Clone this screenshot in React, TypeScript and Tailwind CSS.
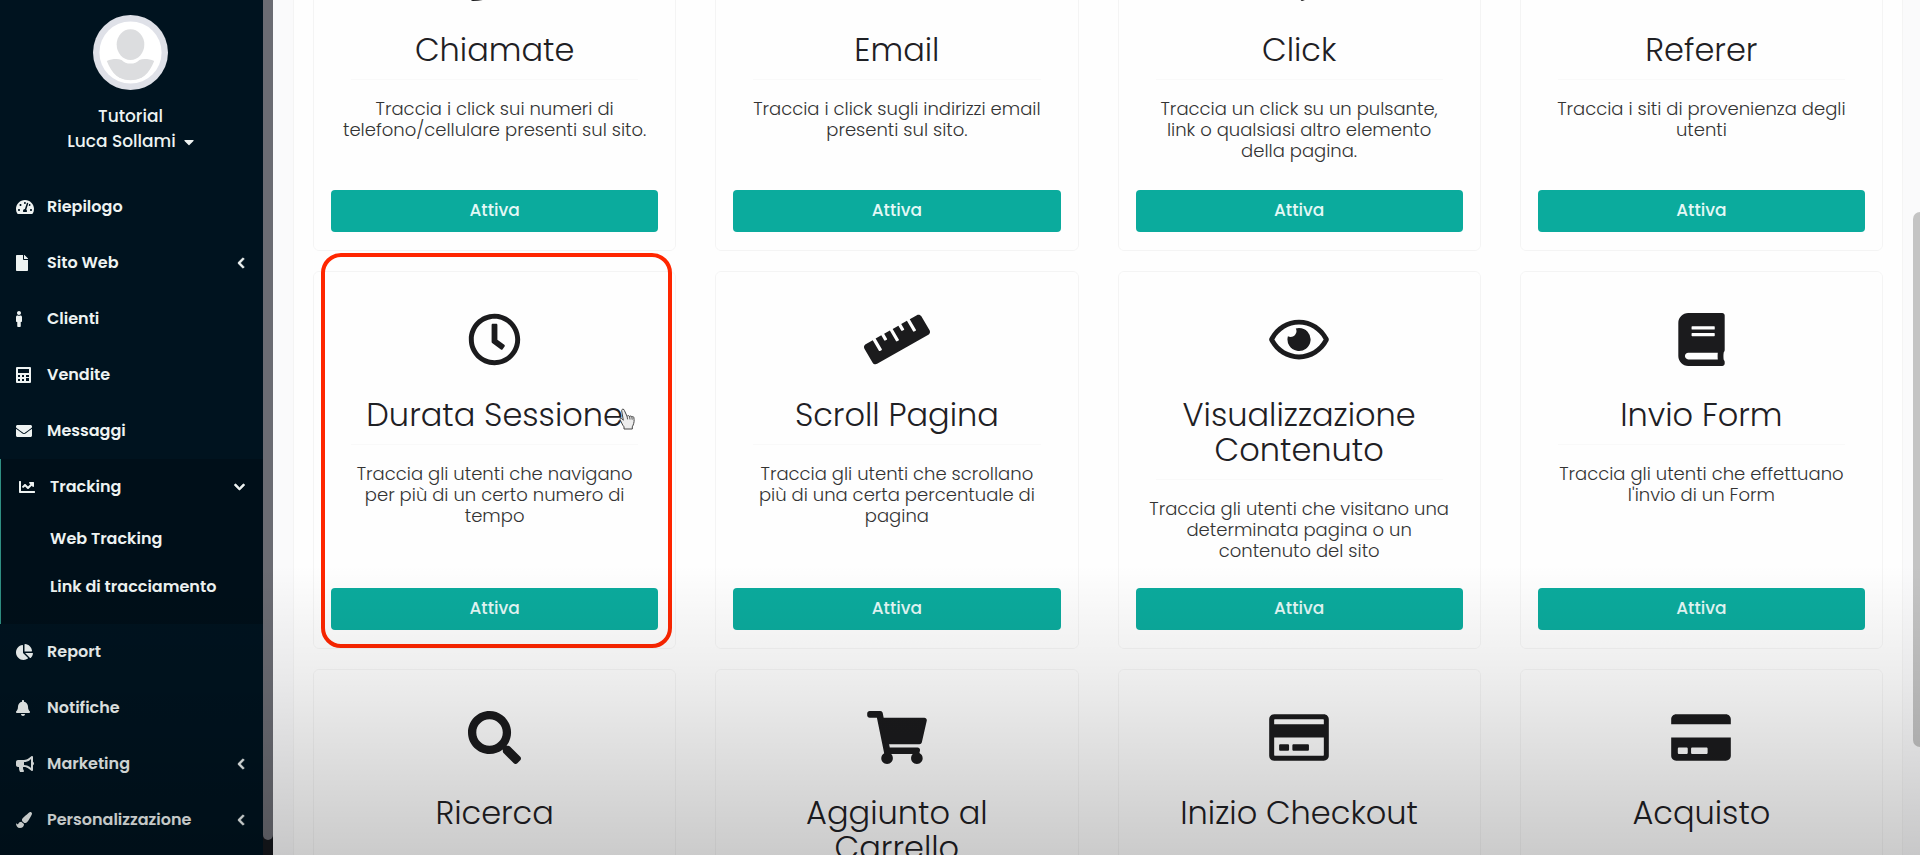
import type { ReactNode } from "react";
import type { IconType } from "react-icons";
import {
  FaBell, FaBook, FaBullhorn, FaCaretDown, FaChartLine, FaChartPie, FaChevronDown, FaChevronLeft,
  FaCreditCard, FaEnvelope, FaFile, FaMale, FaMousePointer, FaPaintBrush, FaPhone, FaRegClock,
  FaRegCreditCard, FaRegEye, FaReply, FaRuler, FaSearch, FaShoppingCart, FaTachometerAlt,
} from "react-icons/fa";

type CardData = { icon: IconType; iconWidth?: string; title: string; text?: string; highlighted?: boolean };

const cards: CardData[] = [
  { icon: FaPhone, title: "Chiamate", text: "Traccia i click sui numeri di telefono/cellulare presenti sul sito." },
  { icon: FaEnvelope, title: "Email", text: "Traccia i click sugli indirizzi email presenti sul sito." },
  { icon: FaMousePointer, title: "Click", text: "Traccia un click su un pulsante, link o qualsiasi altro elemento della pagina." },
  { icon: FaReply, title: "Referer", text: "Traccia i siti di provenienza degli utenti" },
  { icon: FaRegClock, title: "Durata Sessione", text: "Traccia gli utenti che navigano per più di un certo numero di tempo", highlighted: true },
  { icon: FaRuler, iconWidth: "w-[66px]", title: "Scroll Pagina", text: "Traccia gli utenti che scrollano più di una certa percentuale di pagina" },
  { icon: FaRegEye, iconWidth: "w-[60px]", title: "Visualizzazione Contenuto", text: "Traccia gli utenti che visitano una determinata pagina o un contenuto del sito" },
  { icon: FaBook, title: "Invio Form", text: "Traccia gli utenti che effettuano l'invio di un Form" },
  { icon: FaSearch, title: "Ricerca" },
  { icon: FaShoppingCart, iconWidth: "w-[60px]", title: "Aggiunto al Carrello" },
  { icon: FaRegCreditCard, iconWidth: "w-[60px]", title: "Inizio Checkout" },
  { icon: FaCreditCard, iconWidth: "w-[60px]", title: "Acquisto" },
];

const CalculatorIcon: IconType = ({ className }) => (
  <svg viewBox="0 0 15 16" className={className} aria-hidden="true">
    <path
      fill="currentColor"
      fillRule="evenodd"
      d="M1 0h13a1 1 0 0 1 1 1v14a1 1 0 0 1-1 1H1a1 1 0 0 1-1-1V1a1 1 0 0 1 1-1zM2 2v4h11V2zM2 8v2h2V8zM6 8v2h2V8zM10 8v2h3V8zM2 12v2h2v-2zM6 12v2h2v-2zM10 11v3h3v-3z"
    />
  </svg>
);

function HandCursor() {
  return (
    <svg viewBox="0 0 16 22" className="absolute top-[136px] right-[40px] h-[22px] w-4" aria-hidden="true">
      <path
        d="M4 1.2c-1 0-1.500.8-1.300 1.700l1.600 9.300-1.600-1.600c-.8-.7-2-.2-1.700 1l2.800 5.600 1.200 1.600V21h8.300v-2.200c1.200-2.200 2-4.600 1.800-7.200l-.3-2.200c-.2-1-1.600-1.100-1.900-.2-.2-1.400-1.900-1.600-2.300-.5-.3-1.300-2-1.500-2.500-.3L5.400 2.500C5.300 1.700 4.800 1.200 4 1.200z"
        fill="#ededed"
        stroke="#444"
        strokeWidth="1"
      />
      <path d="M8.1 8.400l.5 3M10.600 8.700l.4 2.800M12.900 9.200l.3 2.500" stroke="#444" strokeWidth=".9" />
    </svg>
  );
}

function Card({ icon: Icon, iconWidth = "w-[53px]", title, text, highlighted }: CardData) {
  return (
    <article className="relative flex flex-col rounded-md border border-black/4 px-[17px] pt-[41px] pb-[18px] text-center">
      <Icon className={`mx-auto h-[53px] shrink-0 text-[#1b1b1d] ${iconWidth}`} />
      <h2 className="mx-auto mt-[31px] max-w-[270px] text-[32px] leading-[35px] font-light text-[#1e2024]">{title}</h2>
      {text && (
        <>
          <hr className="mx-5 mt-[12px] border-black/2" />
          <p className="mx-auto mt-[18px] mb-6 max-w-[304px] text-[18px] leading-[21px] font-light text-[#333]">{text}</p>
          <button className="mt-auto h-[42px] shrink-0 rounded-[4px] bg-[#0bab9d] text-[17px] font-medium text-[#e4f8f6]">Attiva</button>
        </>
      )}
      {highlighted && (
        <>
          <span className="pointer-events-none absolute -top-[19px] right-[3px] bottom-0 left-[7px] rounded-[20px] border-4 border-[#ff2600]" />
          <HandCursor />
        </>
      )}
    </article>
  );
}

type NavLinkProps = { icon: IconType; iconWidth: string; children: ReactNode; arrow?: "left" | "down" };

function NavLink({ icon: Icon, iconWidth, children, arrow }: NavLinkProps) {
  return (
    <a href="#" className="flex h-14 items-center pr-[18px] pl-4">
      <span className="w-[31px] shrink-0">
        <Icon className={`h-4 ${iconWidth}`} />
      </span>
      <span className="flex-1">{children}</span>
      {arrow === "left" && <FaChevronLeft className="h-3 w-2 stroke-current stroke-[30px]" />}
      {arrow === "down" && <FaChevronDown className="h-3 w-[11px] stroke-current stroke-[30px]" />}
    </a>
  );
}

function Sidebar() {
  return (
    <aside className="flex w-[273px] shrink-0 bg-[#00131f] text-[#eef3f2]">
      <div className="flex-1">
        <div className="flex flex-col items-center pt-[15px] pr-0.5 text-[17px] leading-[25px] font-medium">
          <svg viewBox="0 0 76 76" className="mb-[14px] size-[75px]" aria-hidden="true">
            <defs>
              <clipPath id="bust">
                <circle cx="38" cy="37" r="29" />
              </clipPath>
            </defs>
            <circle cx="38" cy="38" r="38" fill="#dfe1e8" />
            <circle cx="38" cy="38" r="31.500" fill="#fff" />
            <path d="M14 46.500c5-2 11-2.500 15-1 4 5 14 5 18 0 4-1.500 10-1 15 1-5 13-13 20-24 20s-19-7-24-20z" fill="#dcdddf" clipPath="url(#bust)" />
            <ellipse cx="38" cy="30" rx="14" ry="15.500" fill="#dcdddf" />
          </svg>
          <span>Tutorial</span>
          <button className="flex items-center gap-2">
            Luca Sollami <FaCaretDown className="h-4 w-2.5" />
          </button>
        </div>
        <nav className="mt-[25px] text-[16px] font-semibold">
          <NavLink icon={FaTachometerAlt} iconWidth="w-[18px]">Riepilogo</NavLink>
          <NavLink icon={FaFile} iconWidth="w-3" arrow="left">Sito Web</NavLink>
          <NavLink icon={FaMale} iconWidth="w-1.5">Clienti</NavLink>
          <NavLink icon={CalculatorIcon} iconWidth="w-[15px]">Vendite</NavLink>
          <NavLink icon={FaEnvelope} iconWidth="w-4">Messaggi</NavLink>
          <div className="border-l border-[#2f8f83] bg-[#000f19] pb-[13px] pl-0.5">
            <NavLink icon={FaChartLine} iconWidth="w-4" arrow="down">Tracking</NavLink>
            <a href="#" className="flex h-12 items-center pl-[47px]">Web Tracking</a>
            <a href="#" className="flex h-12 items-center pl-[47px]">Link di tracciamento</a>
          </div>
          <NavLink icon={FaChartPie} iconWidth="w-[17px]">Report</NavLink>
          <NavLink icon={FaBell} iconWidth="w-[14px]">Notifiche</NavLink>
          <NavLink icon={FaBullhorn} iconWidth="w-[18px]" arrow="left">Marketing</NavLink>
          <NavLink icon={FaPaintBrush} iconWidth="w-4" arrow="left">Personalizzazione</NavLink>
        </nav>
      </div>
      <div className="w-2.5 bg-[#15171c] pb-[15px]">
        <div className="h-full rounded-b-full bg-[#6b6c73]" />
      </div>
    </aside>
  );
}

export default function App() {
  return (
    <div className="relative flex h-screen overflow-hidden bg-[#fafafb] font-[Poppins,Inter,sans-serif]">
      <Sidebar />
      <main className="min-w-0 flex-1 pr-2.5 pl-5">
        <section className="border-x border-black/4 bg-[#fefefe] px-[19px]">
          <div className="-mt-[94px] grid auto-rows-[378px] grid-cols-4 grid-rows-[345px] gap-x-[39px] gap-y-5">
            {cards.map((card) => (
              <Card key={card.title} {...card} />
            ))}
          </div>
        </section>
      </main>
      <div className="w-[7px] shrink-0 pt-[212px]">
        <div className="h-[535px] rounded-l-full bg-[#c4c4c4]" />
      </div>
      <div className="pointer-events-none absolute inset-x-0 bottom-0 h-[290px] bg-linear-to-b from-transparent via-black/7 via-40% to-black/20" />
    </div>
  );
}
